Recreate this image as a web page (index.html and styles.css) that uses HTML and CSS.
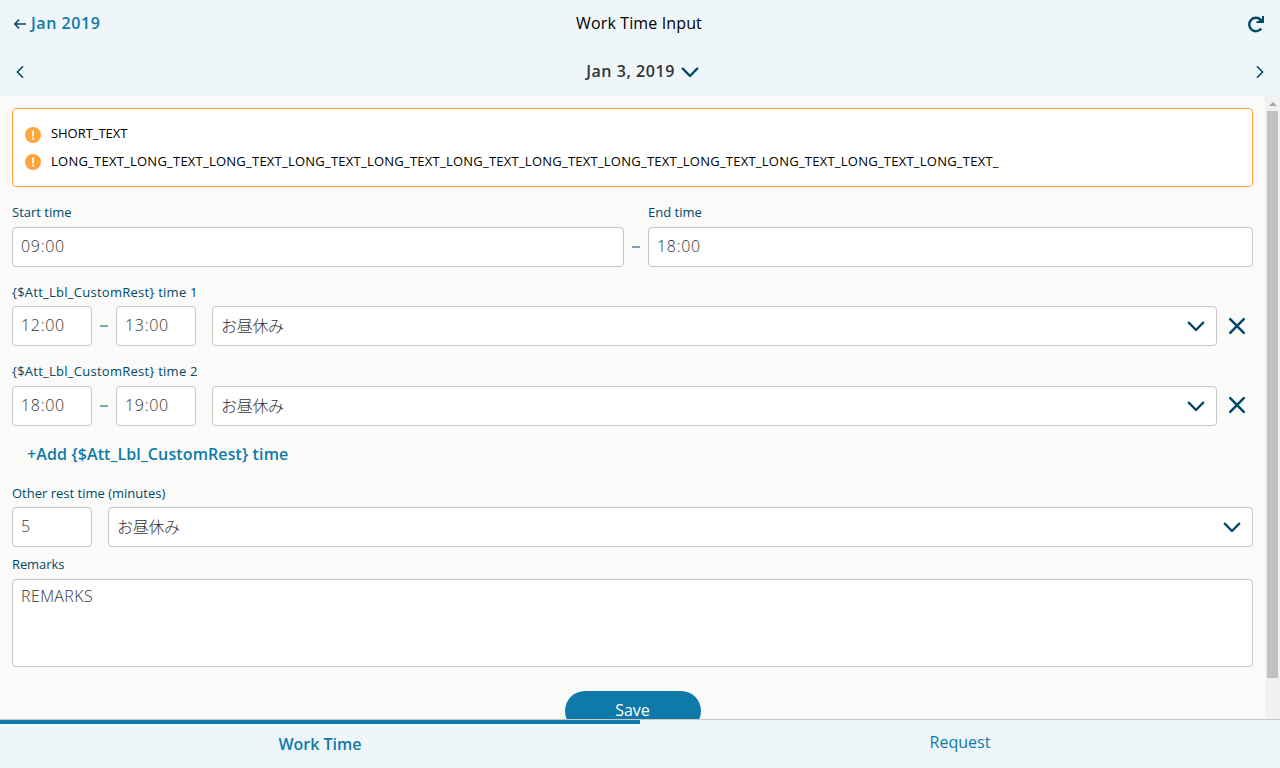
FILE: index.html
```html
<!DOCTYPE html>
<html lang="en">
<head>
<meta charset="utf-8">
<title>Work Time Input</title>
<link rel="stylesheet" href="styles.css">
</head>
<body>
<svg class="defs" aria-hidden="true">
  <symbol id="chevron" viewBox="0 0 18 11"><path d="M1.8 1.6 9 9l7.2-7.4" fill="none" stroke="currentColor" stroke-width="2.3" stroke-linecap="round" stroke-linejoin="round"/></symbol>
  <symbol id="close" viewBox="0 0 18 18"><path d="M2.2 2.2l13.6 13.6M15.8 2.2L2.2 15.8" fill="none" stroke="currentColor" stroke-width="2.5" stroke-linecap="round"/></symbol>
  <symbol id="warning" viewBox="0 0 16 16"><circle cx="8" cy="8" r="8" fill="#ffa53c"/><path d="M8 4.2v4.6" stroke="#fff" stroke-width="1.8" stroke-linecap="round"/><circle cx="8" cy="11.7" r="1.1" fill="#fff"/></symbol>
</svg>
<div class="app">
  <header class="topbar">
    <a class="back"><svg width="13" height="12" viewBox="0 0 13 12"><path d="M13 6H2M6.1 1.4 1.8 6l4.3 4.6" fill="none" stroke="#014968" stroke-width="1.5"/></svg><span class="back-text">Jan 2019</span></a>
    <h1 class="title"><span class="title-text">Work Time Input</span></h1>
    <div class="refresh"><svg width="18" height="18" viewBox="0 0 18 18"><path d="M14.3 13.5A6.7 6.7 0 1 1 13.8 4.9" fill="none" stroke="#014968" stroke-width="2.4"/><path d="M15 1h2v7H9.6V6h3l-.9-1.5L13 3.3l2 1z" fill="#014968"/></svg></div>
  </header>
  <nav class="datebar">
    <svg width="8" height="14" viewBox="0 0 8 14"><path d="M7 1.3 1.4 7 7 12.7" fill="none" stroke="#014968" stroke-width="1.6"/></svg>
    <div class="date"><span class="date-text">Jan 3, 2019</span><svg class="chevron"><use href="#chevron"/></svg></div>
    <svg width="8" height="14" viewBox="0 0 8 14"><path d="M1 1.3 6.6 7 1 12.7" fill="none" stroke="#014968" stroke-width="1.6"/></svg>
  </nav>
  <div class="viewport">
    <main class="content">
      <ul class="alert">
        <li class="alert-item"><svg class="warn"><use href="#warning"/></svg><span class="short-text">SHORT_TEXT</span></li>
        <li class="alert-item"><svg class="warn"><use href="#warning"/></svg><span class="long-text">LONG_TEXT_LONG_TEXT_LONG_TEXT_LONG_TEXT_LONG_TEXT_LONG_TEXT_LONG_TEXT_LONG_TEXT_LONG_TEXT_LONG_TEXT_LONG_TEXT_LONG_TEXT_</span></li>
      </ul>
      <section class="row main-time">
        <div class="start"><div class="label start-label"><span>Start time</span></div><div class="field"><span class="value">09:00</span></div></div>
        <span class="dash"></span>
        <div class="end"><div class="label end-label"><span>End time</span></div><div class="field"><span class="value">18:00</span></div></div>
      </section>
      <section class="rest first">
        <div class="label rest-label"><span>{$Att_Lbl_CustomRest} time 1</span></div>
        <div class="row">
          <div class="field small"><span class="value">12:00</span></div><span class="dash"></span><div class="field small"><span class="value">13:00</span></div>
          <div class="field select"><span class="jp">お昼休み</span><svg class="chevron"><use href="#chevron"/></svg></div>
          <svg class="close"><use href="#close"/></svg>
        </div>
      </section>
      <section class="rest second">
        <div class="label rest-label"><span>{$Att_Lbl_CustomRest} time 2</span></div>
        <div class="row">
          <div class="field small"><span class="value">18:00</span></div><span class="dash"></span><div class="field small"><span class="value">19:00</span></div>
          <div class="field select"><span class="jp">お昼休み</span><svg class="chevron"><use href="#chevron"/></svg></div>
          <svg class="close"><use href="#close"/></svg>
        </div>
      </section>
      <div class="add"><span class="add-text">+Add {$Att_Lbl_CustomRest} time</span></div>
      <section class="other">
        <div class="label other-label"><span>Other rest time (minutes)</span></div>
        <div class="row"><div class="field small"><span class="value">5</span></div><div class="field select"><span class="jp">お昼休み</span><svg class="chevron"><use href="#chevron"/></svg></div></div>
      </section>
      <section class="remarks">
        <div class="label remarks-label"><span>Remarks</span></div>
        <div class="field area"><span class="area-text">REMARKS</span></div>
      </section>
      <div class="save"><span class="save-text">Save</span></div>
    </main>
    <div class="scrollbar"><div class="arrow"></div><div class="thumb"></div></div>
  </div>
  <footer class="tabs">
    <div class="tab active"><span class="tab-active-text">Work Time</span></div>
    <div class="tab"><span class="tab-text">Request</span></div>
  </footer>
</div>
</body>
</html>
```
FILE: styles.css
```css
* { box-sizing: border-box; }
body { margin: 0; font-family: "Open Sans", "Noto Sans CJK JP", sans-serif; color: #000; }
svg { display: block; flex: none; }
span { white-space: nowrap; }
.defs { position: absolute; width: 0; height: 0; }
.app { width: 1280px; height: 768px; display: flex; flex-direction: column; overflow: hidden; background: #fafaf9; }

.topbar { height: 48px; flex: none; display: grid; grid-template-columns: 1fr auto 1fr; align-items: center; padding: 0 15px 0 13px; background: #eef6fa; }
.back { display: flex; align-items: center; gap: 5px; color: #0f7aa9; font-weight: 600; font-size: 16px; line-height: 24px; letter-spacing: .55px; }
.title { margin: 0 0 1px; font-size: 16px; font-weight: 400; line-height: 23px; letter-spacing: .13px; }
.back-text { margin-bottom: 1px; line-height: 23px; }
.refresh { display: flex; justify-content: flex-end; }

.datebar { height: 48px; flex: none; display: flex; align-items: center; justify-content: space-between; padding: 0 16px; background: #eef6fa; color: #333; }
.date { display: flex; align-items: center; gap: 6px; padding-left: 5px; font-size: 16px; font-weight: 600; line-height: 24px; letter-spacing: .55px; }
.date-text { margin-bottom: 1px; line-height: 23px; }
.chevron { width: 18px; height: 11px; color: #014968; }

.viewport { flex: 1; min-height: 0; display: flex; overflow: hidden; }
.content { flex: 1; min-width: 0; padding: 12px; overflow: hidden; }
.alert { margin: 0; padding: 12px; height: 79px; list-style: none; background: #fff; border: 1px solid #ffa53c; border-radius: 4px; }
.alert-item { display: flex; align-items: center; gap: 10px; height: 27px; font-size: 13px; line-height: 20px; }
.alert-item span { margin-top: -3px; }
.alert-item + .alert-item span { margin-top: -1px; }
.short-text { letter-spacing: -.05px; }
.long-text { letter-spacing: .24px; }
.warn { width: 16px; height: 16px; }

.label { height: 19px; margin-bottom: 5px; font-size: 13px; line-height: 19px; color: #014968; }
.rest-label { letter-spacing: .26px; }
.remarks-label { letter-spacing: -.1px; }
.row { display: flex; }
.main-time { margin-top: 16px; align-items: flex-end; }
.start { width: 612px; }
.end { flex: 1; }
.field { height: 40px; padding: 0 8px 1px; display: flex; align-items: center; background: #fff; border: 1px solid #c9c7c5; border-radius: 4px; color: #333; font-size: 16px; font-weight: 300; line-height: 23px; }
.value { letter-spacing: .7px; }
.small { width: 80px; flex: none; }
.dash { width: 8px; height: 2px; margin: 19px 8px; flex: none; background: #7ea2b4; }
.select { flex: 1; margin-left: 16px; padding: 0 11px 0 8px; justify-content: space-between; }
.jp { margin-bottom: 2px; font-family: "Noto Sans CJK JP", sans-serif; font-size: 16px; letter-spacing: -.3px; }
.close { width: 18px; height: 18px; margin: 11px 7px 0 11px; color: #014968; }
.first { margin-top: 16px; }
.first .label { margin-bottom: 4px; }
.second { margin-top: 16px; }
.second .close { margin-top: 10px; }
.add { height: 24px; margin-top: 16px; padding-left: 15px; font-size: 16px; font-weight: 600; line-height: 24px; letter-spacing: .12px; color: #0f7aa9; }
.other { margin-top: 18px; }
.other .label { margin-bottom: 4px; }
.remarks { margin-top: 8px; }
.area { height: 88px; align-items: flex-start; padding-top: 5px; line-height: 22px; letter-spacing: .4px; }
.save { width: 136px; height: 40px; margin: 24px auto 0; padding-bottom: 1px; display: flex; align-items: center; justify-content: center; border-radius: 20px; background: #0f7aa9; color: #fff; font-size: 16px; line-height: 23px; }

.scrollbar { width: 15px; flex: none; background: #f1f1f1; display: flex; flex-direction: column; align-items: center; }
.arrow { margin: 6px 0 5px; border: 4px solid transparent; border-top: 0; border-bottom-color: #a3a3a3; }
.thumb { width: 11px; height: 567px; background: #c1c1c1; }

.tabs { height: 49px; flex: none; display: flex; border-top: 1px solid #c9c7c5; background: #eef6fa; color: #0f7aa9; font-size: 16px; }
.tab { flex: 1; display: flex; align-items: center; justify-content: center; padding-bottom: 4px; }
.active { border-top: 4px solid #0f7aa9; font-weight: 600; padding-bottom: 4px; }
```
